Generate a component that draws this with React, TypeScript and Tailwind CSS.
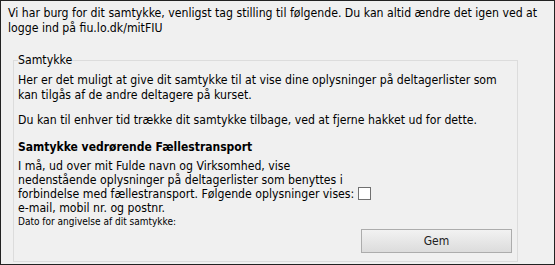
import React from "react";

export default function App() {
  return (
    <div className="w-[555px] h-[265px] box-border border border-[#222] bg-[#f0f0f0] text-black font-['DejaVu_Sans_Condensed','DejaVu_Sans',sans-serif] text-[12.2px] leading-[15px] overflow-hidden">
      <p className="pl-[7px] pt-[5px] whitespace-nowrap">
        Vi har burg for dit samtykke, venligst tag stilling til følgende. Du kan altid ændre det igen ved at
        <br />
        logge ind på fiu.lo.dk/mitFIU
      </p>
      <fieldset className="ml-[12px] mt-[17px] w-[505px] h-[209px] box-border border border-[#dcdcdc] pl-[4px] pr-[5px]">
        <legend className="px-0 leading-[15px]">Samtykke</legend>
        <div className="pt-[5px] whitespace-nowrap">
          <p>
            Her er det muligt at give dit samtykke til at vise dine oplysninger på deltagerlister som
            <br />
            kan tilgås af de andre deltagere på kurset.
          </p>
          <p className="mt-[10px]">Du kan til enhver tid trække dit samtykke tilbage, ved at fjerne hakket ud for dette.</p>
          <h3 className="mt-[12px] font-bold text-[12px]">Samtykke vedrørende Fællestransport</h3>
          <p className="mt-[4px] leading-[14px]">
            I må, ud over mit Fulde navn og Virksomhed, vise
            <br />
            nedenstående oplysninger på deltagerlister som benyttes i
            <br />
            forbindelse med fællestransport. Følgende oplysninger vises:{" "}
            <span className="inline-block align-[-2px] w-[13px] h-[13px] border border-[#707070] bg-white box-border" />
            <br />
            e-mail, mobil nr. og postnr.
          </p>
          <p className="text-[10px] leading-[13px]">Dato for angivelse af dit samtykke:</p>
          <div className="flex justify-end mt-[1px]">
            <button className="w-[151px] h-[24px] box-border border border-[#acacac] bg-gradient-to-b from-[#f2f2f2] to-[#dcdcdc] text-[12px] text-[#222]">
              Gem
            </button>
          </div>
        </div>
      </fieldset>
    </div>
  );
}
